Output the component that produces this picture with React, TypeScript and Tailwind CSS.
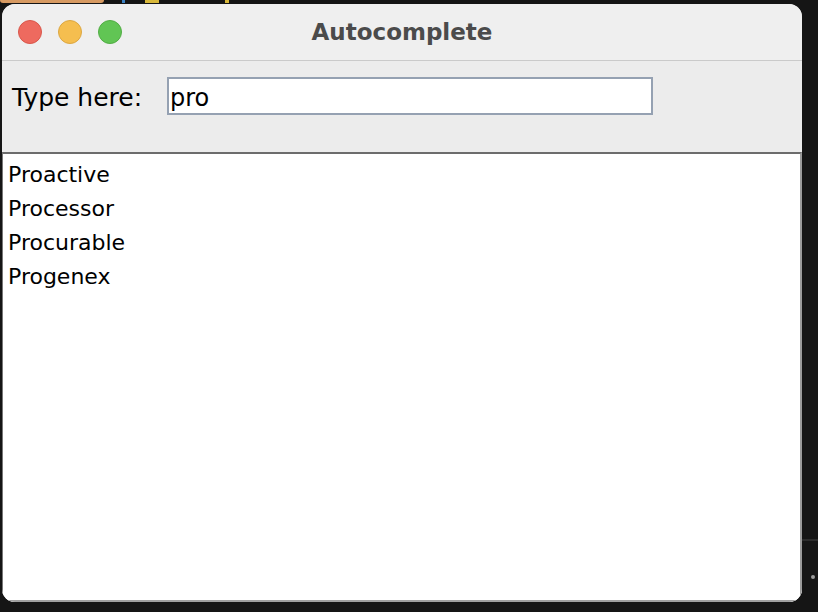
import React from 'react'

const ITEMS = ['Proactive', 'Processor', 'Procurable', 'Progenex']

const ui = { fontFamily: '"DejaVu Sans", "Liberation Sans", sans-serif' }

function TrafficLights() {
  return (
    <div className="flex items-center gap-[16px] pl-[16px]">
      <span className="block h-[24px] w-[24px] rounded-full border border-[#d9574b] bg-[#ee6a5f]" />
      <span className="block h-[24px] w-[24px] rounded-full border border-[#dca742] bg-[#f5be4f]" />
      <span className="block h-[24px] w-[24px] rounded-full border border-[#52ad45] bg-[#61c554]" />
    </div>
  )
}

export default function App() {
  return (
    <div className="flex h-[612px] w-[818px] flex-col overflow-hidden bg-[#151515]" style={ui}>
      {/* bits of editor code peeking above the window */}
      <div className="flex h-[4px] shrink-0 items-start gap-[6px] overflow-hidden">
        <span className="block h-[3px] w-[104px] rounded-b-sm bg-[#d79a62]" />
        <span className="ml-[12px] block h-[3px] w-[3px] bg-[#3b82c4]" />
        <span className="ml-[14px] block h-[3px] w-[14px] bg-[#d8b83a]" />
        <span className="ml-[60px] block h-[3px] w-[4px] bg-[#d8b83a]" />
      </div>

      <div className="flex flex-1">
        <div className="w-[2px] shrink-0" />

        {/* window */}
        <div className="flex h-[598px] w-[800px] shrink-0 flex-col overflow-hidden rounded-[13px] bg-[#ececec]">
          <div className="grid h-[57px] shrink-0 grid-cols-[1fr_auto_1fr] items-center border-b border-[#cacaca] bg-[#efefef]">
            <TrafficLights />
            <div className="text-[23px] font-bold text-[#4b4b4b]">Autocomplete</div>
            <div />
          </div>

          <div className="flex h-[91px] shrink-0 items-start pl-[10px] pt-[16px]">
            <div className="flex h-[38px] w-[155px] items-center pt-[3px] text-[25px] text-black">Type here:</div>
            <div className="flex h-[38px] w-[486px] items-center border-2 border-[#95a1b2] bg-white pl-[1px] pt-[3px] text-[24px] text-black">
              pro
            </div>
          </div>

          <div className="flex-1 border-b-2 border-l border-r-2 border-t-2 border-b-[#a0a0a0] border-l-[#777777] border-r-[#9b9b9b] border-t-[#6c6c6c] bg-white pl-[5px] pt-[4px]">
            {ITEMS.map((item) => (
              <div key={item} className="h-[34px] text-[22px] leading-[34px] text-black">
                {item}
              </div>
            ))}
          </div>
        </div>

        <div className="flex w-[16px] shrink-0 flex-col">
          <div className="h-[535px]" />
          <div className="h-[2px] bg-[#2c2c2c]" />
          <div className="h-[34px]" />
          <div className="ml-[9px] h-[4px] w-[4px] rounded-full bg-[#9a9a9a]" />
        </div>
      </div>

      <div className="h-[10px] shrink-0" />
    </div>
  )
}
